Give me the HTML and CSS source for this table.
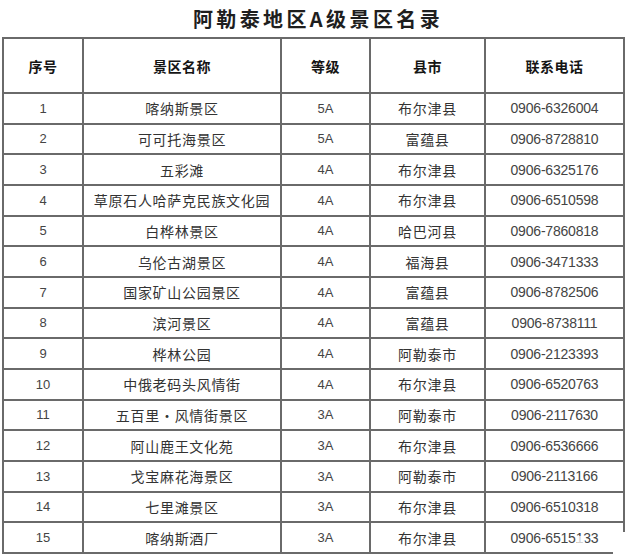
FILE: index.html
```html
<!DOCTYPE html>
<html lang="zh-CN">
<head>
<meta charset="utf-8">
<title>阿勒泰地区A级景区名录</title>
<link rel="stylesheet" href="styles.css">
</head>
<body>
<div class="sheet">
  <h1 class="title">阿勒泰地区A级景区名录</h1>
  <div class="table" role="table">
    <div class="cell head">序号</div>
    <div class="cell head">景区名称</div>
    <div class="cell head">等级</div>
    <div class="cell head">县市</div>
    <div class="cell head">联系电话</div>

    <div class="cell num">1</div><div class="cell name">喀纳斯景区</div><div class="cell lvl">5A</div><div class="cell name">布尔津县</div><div class="cell tel">0906-6326004</div>
    <div class="cell num">2</div><div class="cell name">可可托海景区</div><div class="cell lvl">5A</div><div class="cell name">富蕴县</div><div class="cell tel">0906-8728810</div>
    <div class="cell num">3</div><div class="cell name">五彩滩</div><div class="cell lvl">4A</div><div class="cell name">布尔津县</div><div class="cell tel">0906-6325176</div>
    <div class="cell num">4</div><div class="cell name">草原石人哈萨克民族文化园</div><div class="cell lvl">4A</div><div class="cell name">布尔津县</div><div class="cell tel">0906-6510598</div>
    <div class="cell num">5</div><div class="cell name">白桦林景区</div><div class="cell lvl">4A</div><div class="cell name">哈巴河县</div><div class="cell tel">0906-7860818</div>
    <div class="cell num">6</div><div class="cell name">乌伦古湖景区</div><div class="cell lvl">4A</div><div class="cell name">福海县</div><div class="cell tel">0906-3471333</div>
    <div class="cell num">7</div><div class="cell name">国家矿山公园景区</div><div class="cell lvl">4A</div><div class="cell name">富蕴县</div><div class="cell tel">0906-8782506</div>
    <div class="cell num">8</div><div class="cell name">滨河景区</div><div class="cell lvl">4A</div><div class="cell name">富蕴县</div><div class="cell tel">0906-8738111</div>
    <div class="cell num">9</div><div class="cell name">桦林公园</div><div class="cell lvl">4A</div><div class="cell name">阿勒泰市</div><div class="cell tel">0906-2123393</div>
    <div class="cell num">10</div><div class="cell name">中俄老码头风情街</div><div class="cell lvl">4A</div><div class="cell name">布尔津县</div><div class="cell tel">0906-6520763</div>
    <div class="cell num">11</div><div class="cell name">五百里·风情街景区</div><div class="cell lvl">3A</div><div class="cell name">阿勒泰市</div><div class="cell tel">0906-2117630</div>
    <div class="cell num">12</div><div class="cell name">阿山鹿王文化苑</div><div class="cell lvl">3A</div><div class="cell name">布尔津县</div><div class="cell tel">0906-6536666</div>
    <div class="cell num">13</div><div class="cell name">戈宝麻花海景区</div><div class="cell lvl">3A</div><div class="cell name">阿勒泰市</div><div class="cell tel">0906-2113166</div>
    <div class="cell num">14</div><div class="cell name">七里滩景区</div><div class="cell lvl">3A</div><div class="cell name">布尔津县</div><div class="cell tel">0906-6510318</div>
    <div class="cell num">15</div><div class="cell name">喀纳斯酒厂</div><div class="cell lvl">3A</div><div class="cell name">布尔津县</div><div class="cell tel">0906-6515133</div>
  </div>
  <div class="fade"></div>
  <div class="corner"></div>
</div>
</body>
</html>
```

FILE: styles.css
```css
html, body {
  margin: 0;
  padding: 0;
  background: #fff;
}

.sheet {
  position: relative;
  width: 632px;
  height: 557px;
  overflow: hidden;
  background: #fff;
  font-family: "Noto Sans CJK SC", "Liberation Sans", sans-serif;
  color: #333;
}

.title {
  margin: 0;
  height: 37px;
  display: flex;
  align-items: center;
  justify-content: center;
  padding-left: 4px;
  font-size: 20px;
  font-weight: 700;
  letter-spacing: 3.4px;
  color: #1e1e1e;
  line-height: 1;
}

.table {
  margin-left: 2px;
  width: 623px;
  box-sizing: border-box;
  display: grid;
  grid-template-columns: 78px 196px 87px 113px 137px;
  grid-template-rows: 53px repeat(15, 28.67px);
  gap: 2px;
  padding: 2px;
  background: #6a6a6a;
}

.cell {
  background: #fff;
  display: flex;
  align-items: center;
  justify-content: center;
  font-size: 14px;
  line-height: 1;
  white-space: nowrap;
}

.head {
  font-weight: 700;
  color: #151515;
  letter-spacing: 0.5px;
}

.name {
  letter-spacing: 0.7px;
  color: #333;
}

.num,
.lvl {
  font-family: "Liberation Sans", sans-serif;
  font-size: 13px;
  color: #444;
}

.tel {
  font-family: "Liberation Sans", sans-serif;
  font-size: 14px;
  letter-spacing: -0.2px;
  color: #444;
}

.fade {
  position: absolute;
  left: 577px;
  top: 536px;
  width: 8px;
  height: 14px;
  background: rgba(255, 255, 255, 0.75);
}

.corner {
  position: absolute;
  left: 613px;
  top: 532px;
  width: 19px;
  height: 25px;
  background: #fff;
}
```
